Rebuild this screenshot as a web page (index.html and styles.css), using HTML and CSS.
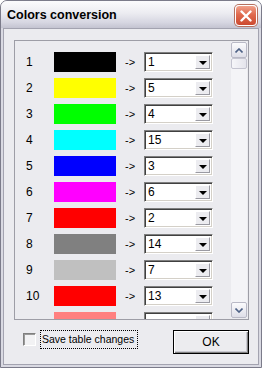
FILE: index.html
```html
<!DOCTYPE html>
<html lang="en">
<head>
  <meta charset="UTF-8" />
  <title>Colors conversion</title>
  <link rel="stylesheet" href="styles.css">
</head>
<body>
  <div class="window">
    <div class="titlebar">
      <span class="title">Colors conversion</span>
      <button class="close" aria-label="Close">
        <svg width="12" height="12" viewBox="0 0 12 12">
          <path d="M1.5 1.5 L10.5 10.5 M10.5 1.5 L1.5 10.5" stroke="#fff" stroke-width="2.4" stroke-linecap="round"/>
        </svg>
      </button>
    </div>

    <div class="client">
      <div class="panel">
        <div class="rows">
          <div class="row"><span class="num">1</span><span class="swatch c-black"></span><span class="arrow">-&gt;</span><div class="combo"><span class="value">1</span><span class="drop"></span></div></div>
          <div class="row"><span class="num">2</span><span class="swatch c-yellow"></span><span class="arrow">-&gt;</span><div class="combo"><span class="value">5</span><span class="drop"></span></div></div>
          <div class="row"><span class="num">3</span><span class="swatch c-green"></span><span class="arrow">-&gt;</span><div class="combo"><span class="value">4</span><span class="drop"></span></div></div>
          <div class="row"><span class="num">4</span><span class="swatch c-cyan"></span><span class="arrow">-&gt;</span><div class="combo"><span class="value">15</span><span class="drop"></span></div></div>
          <div class="row"><span class="num">5</span><span class="swatch c-blue"></span><span class="arrow">-&gt;</span><div class="combo"><span class="value">3</span><span class="drop"></span></div></div>
          <div class="row"><span class="num">6</span><span class="swatch c-magenta"></span><span class="arrow">-&gt;</span><div class="combo"><span class="value">6</span><span class="drop"></span></div></div>
          <div class="row"><span class="num">7</span><span class="swatch c-red"></span><span class="arrow">-&gt;</span><div class="combo"><span class="value">2</span><span class="drop"></span></div></div>
          <div class="row"><span class="num">8</span><span class="swatch c-grey"></span><span class="arrow">-&gt;</span><div class="combo"><span class="value">14</span><span class="drop"></span></div></div>
          <div class="row"><span class="num">9</span><span class="swatch c-silver"></span><span class="arrow">-&gt;</span><div class="combo"><span class="value">7</span><span class="drop"></span></div></div>
          <div class="row"><span class="num">10</span><span class="swatch c-red"></span><span class="arrow">-&gt;</span><div class="combo"><span class="value">13</span><span class="drop"></span></div></div>
          <!-- row 11 is scrolled mostly out of view -->
          <div class="row"><span class="num"></span><span class="swatch c-salmon"></span><span class="arrow"></span><div class="combo"><span class="value"></span><span class="drop"></span></div></div>
        </div>

        <div class="scrollbar">
          <div class="sb-btn">
            <svg width="8" height="5" viewBox="0 0 8 5"><path d="M0.5 4.5 L4 1 L7.5 4.5" fill="none" stroke="#4d6185" stroke-width="1.6"/></svg>
          </div>
          <div class="sb-thumb"></div>
          <div class="sb-track"></div>
          <div class="sb-btn">
            <svg width="8" height="5" viewBox="0 0 8 5"><path d="M0.5 0.5 L4 4 L7.5 0.5" fill="none" stroke="#4d6185" stroke-width="1.6"/></svg>
          </div>
        </div>
      </div>

      <div class="footer">
        <span class="checkbox"></span>
        <label class="check-label">Save table changes</label>
        <button class="ok">OK</button>
      </div>
    </div>
  </div>
</body>
</html>
```

FILE: styles.css
```css
body {
  margin: 0;
  background: #ffffff;
  font-family: 'Liberation Sans', Arial, sans-serif;
}

.window {
  width: 262px;
  height: 368px;
  box-sizing: border-box;
  border: 1px solid #7b7b8a;
  border-radius: 7px 7px 0 0;
  background: #d9d9e2;
  padding: 0 2px 2px;
  display: flex;
  flex-direction: column;
}

.titlebar {
  height: 27px;
  margin: 0 -2px;
  padding: 0 4px 0 6px;
  display: flex;
  align-items: center;
  justify-content: space-between;
  border-radius: 6px 6px 0 0;
  background: linear-gradient(#fbfbfd, #ececf1 45%, #d6d6e1 80%, #c4c4d1);
}

.title {
  font-size: 12.5px;
  font-weight: bold;
  color: #000;
  margin-top: 1px;
}

.close {
  width: 22px;
  height: 21px;
  padding: 0;
  margin-top: 2px;
  display: flex;
  align-items: center;
  justify-content: center;
  border: 1px solid #fff;
  border-radius: 4px;
  box-shadow: 0 0 0 1px #b5705f;
  background: linear-gradient(#f0a28c, #e06a4e 45%, #cc4a30);
}

.client {
  flex: 1;
  border: 1px solid #a3a3b0;
  background: #ebebef;
  padding: 11px 0 0 10px;
}

/* Table of colours */
.panel {
  width: 235px;
  height: 280px;
  box-sizing: border-box;
  border: 1px solid #9d9da6;
  display: flex;
}

.rows {
  flex: 1;
  overflow: hidden;
  padding: 11px 0 0 11px;
}

.row {
  display: flex;
  align-items: center;
  height: 20px;
  margin-bottom: 6px;
  font-size: 12px;
  color: #000;
}

.num {
  width: 28px;
}

.swatch {
  width: 62px;
  height: 20px;
}

.c-black { background: #000000; }
.c-yellow { background: #ffff00; }
.c-green { background: #00ff00; }
.c-cyan { background: #00ffff; }
.c-blue { background: #0000ff; }
.c-magenta { background: #ff00ff; }
.c-red { background: #ff0000; }
.c-grey { background: #808080; }
.c-silver { background: #c0c0c0; }
.c-salmon { background: #ff8080; }

.arrow {
  width: 19px;
  margin-left: 9px;
  font-size: 11px;
}

.combo {
  width: 69px;
  height: 20px;
  box-sizing: border-box;
  display: flex;
  align-items: center;
  background: #fff;
  border: 1px solid;
  border-color: #7f7f7f #ffffff #ffffff #7f7f7f;
  box-shadow: inset 1px 1px #404040, inset -1px -1px #d4d0c8;
}

.value {
  flex: 1;
  padding-left: 3px;
}

.drop {
  width: 15px;
  height: 14px;
  margin-right: 2px;
  box-sizing: border-box;
  background: #ececf0;
  border: 1px solid;
  border-color: #ffffff #9a9aa2 #9a9aa2 #ffffff;
  display: flex;
  align-items: center;
  justify-content: center;
}

.drop::after {
  content: "";
  border-left: 4px solid transparent;
  border-right: 4px solid transparent;
  border-top: 4px solid #000;
  margin-top: 1px;
}

/* Scrollbar */
.scrollbar {
  width: 16px;
  margin: 1px 1px 1px 0;
  display: flex;
  flex-direction: column;
  background: #f4f4f7;
}

.sb-btn {
  height: 16px;
  box-sizing: border-box;
  border: 1px solid #b9b9c6;
  border-radius: 2px;
  background: linear-gradient(#fbfbfd, #dedee8);
  display: flex;
  align-items: center;
  justify-content: center;
}

.sb-thumb {
  height: 11px;
  box-sizing: border-box;
  border: 1px solid #c4c4d0;
  border-radius: 2px;
  background: linear-gradient(90deg, #f6f6f9, #e4e4ec);
}

.sb-track {
  flex: 1;
}

/* Footer */
.footer {
  display: flex;
  align-items: flex-start;
  width: 235px;
  margin-top: 10px;
}

.checkbox {
  width: 13px;
  height: 13px;
  box-sizing: border-box;
  margin: 3px 0 0 9px;
  background: #f2f2f4;
  border: 1px solid;
  border-color: #7f7f7f #ffffff #ffffff #7f7f7f;
  box-shadow: inset 1px 1px #9a9a9a;
}

.check-label {
  margin-left: 4px;
  height: 19px;
  width: 98px;
  box-sizing: border-box;
  border: 1px dotted #000;
  padding: 2px 0 0 1px;
  font-size: 10.5px;
  white-space: nowrap;
  overflow: hidden;
  color: #000;
}

.ok {
  margin-left: auto;
  width: 76px;
  height: 24px;
  padding: 0;
  font-family: 'Liberation Sans', Arial, sans-serif;
  font-size: 12px;
  color: #000;
  background: #ececef;
  border: 1px solid #000;
  box-shadow: inset 1px 1px #ffffff, inset -1px -1px #808080, inset -2px -2px #c8c8d0;
}
```
